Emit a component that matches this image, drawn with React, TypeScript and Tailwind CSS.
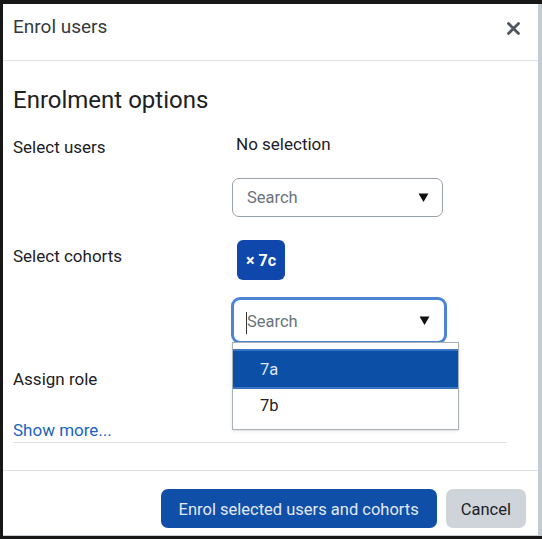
import React from "react";

const font = { fontFamily: "Roboto, 'Liberation Sans', sans-serif" };

function Caret() {
  return (
    <svg width="11" height="11" viewBox="0 0 11 11" aria-hidden="true">
      <path d="M0.5 1.5 H10.5 L5.5 10 Z" fill="#111" />
    </svg>
  );
}

function SearchBox({ focused }: { focused?: boolean }) {
  if (focused) {
    return (
      <div className="relative -ml-[1px] w-[216px] h-[47px] rounded-[9px] border-[3px] border-[#4d84d4] flex items-center pl-[12px] pr-[14px]">
        <span className="w-[1px] h-[22px] bg-[#333] mt-[4px]" />
        <span className="flex-1 text-[16.5px] text-[#6a737b] pt-[4px]">Search</span>
        <Caret />
        {/* open suggestion list */}
        <div className="absolute left-[-2px] top-[42px] w-[227px] h-[88px] bg-white border border-[#a9b0b6] pt-[6px] shadow-sm z-10">
          <div className="h-[40px] bg-[#0b4fa6] border-t-[2px] border-b-[2px] border-[#3c74c4] flex items-center pl-[27px] pt-[3px] text-[16.5px] text-[#dfe6ef]">
            7a
          </div>
          <div className="h-[31px] flex items-center pl-[27px] pt-[4px] text-[16.5px] text-[#1d2125]">
            7b
          </div>
        </div>
      </div>
    );
  }
  return (
    <div className="w-[211px] h-[39px] rounded-[7px] border border-[#99a1a9] flex items-center pl-[14px] pr-[13px]">
      <span className="flex-1 text-[16.5px] text-[#6a737b] pt-[2px]">Search</span>
      <Caret />
    </div>
  );
}

export default function App() {
  return (
    <div
      className="w-[542px] h-[539px] bg-[#171717] pt-[4px] pl-[3px] pb-[3px] flex"
      style={font}
    >
      <div className="flex-1 bg-white border-r-[4px] border-r-[#c4cbd1] border-b border-b-[#c8cdd2] flex flex-col">
        {/* Header */}
        <div className="h-[57px] border-b border-[#dee2e6] flex items-start justify-between pl-[10px] pr-[18px] pt-[11px]">
          <h5 className="text-[19px] leading-[24px] text-[#343a40]">Enrol users</h5>
          <svg width="13" height="13" viewBox="0 0 13 13" className="mt-[7px]" aria-hidden="true">
            <path d="M1.5 1.5 L11.5 11.5 M11.5 1.5 L1.5 11.5" stroke="#4e555c" strokeWidth="2.8" strokeLinecap="round" />
          </svg>
        </div>

        {/* Body */}
        <div className="flex-1 pl-[10px] pr-[31px] pt-[24px]">
          <h4 className="text-[24px] leading-[30px] text-[#1d2125]">Enrolment options</h4>

          <div className="grid grid-cols-[219px_1fr] mt-[13px]">
            <div className="text-[17px] leading-[24px] text-[#1d2125] pt-[7px]">Select users</div>
            <div>
              <div className="pl-[4px] text-[17px] leading-[24px] text-[#1d2125] pt-[4px]">No selection</div>
              <div className="mt-[22px]">
                <SearchBox />
              </div>
            </div>
          </div>

          <div className="grid grid-cols-[219px_1fr] mt-[23px]">
            <div className="text-[17px] leading-[24px] text-[#1d2125] pt-[4px]">Select cohorts</div>
            <div>
              <span className="ml-[5px] inline-flex items-center h-[40px] px-[9px] pt-[1px] rounded-[6px] bg-[#0f47ad] text-white text-[16px] font-bold">
                × 7c
              </span>
              <div className="mt-[17px]">
                <SearchBox focused />
              </div>
            </div>
          </div>

          <div className="grid grid-cols-[219px_1fr] mt-[23px]">
            <div className="text-[17px] leading-[24px] text-[#1d2125]">Assign role</div>
            <div />
          </div>

          <a className="block mt-[27px] text-[17px] leading-[24px] text-[#1a64c0]">Show more...</a>
          <div className="mt-[0px] border-b border-[#dee2e6]" />
        </div>

        {/* Footer */}
        <div className="h-[65px] border-t border-[#dee2e6] flex items-start justify-end gap-[9px] pt-[18px] pr-[12px]">
          <button className="h-[39px] px-[18px] pt-[3px] rounded-[7px] bg-[#0f4fa8] text-[#e3e9f2] text-[16.5px]">
            Enrol selected users and cohorts
          </button>
          <button className="h-[39px] px-[15px] pt-[3px] rounded-[7px] bg-[#ced4da] text-[#1d2125] text-[16.5px]">
            Cancel
          </button>
        </div>
      </div>
    </div>
  );
}
